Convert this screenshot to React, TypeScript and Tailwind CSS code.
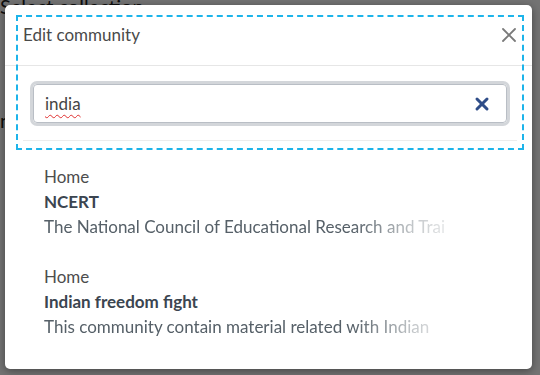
import { X } from 'lucide-react'

type Community = {
  parent: string
  name: string
  description: string
}

// descriptions are shown as clipped previews, faded out at the right
const results: Community[] = [
  {
    parent: 'Home',
    name: 'NCERT',
    description: 'The National Council of Educational Research and Trai',
  },
  {
    parent: 'Home',
    name: 'Indian freedom fight',
    description: 'This community contain material related with Indian',
  },
]

export default function App() {
  return (
    <div className="relative h-[375px] w-[540px] overflow-hidden bg-white font-['Lato',sans-serif]">
      {/* page behind the dialog */}
      <div className="-mt-[9px] text-[20px] text-[#222]">Select collection</div>
      <div className="mt-[84px] text-[20px] text-[#222]">n</div>

      <div className="absolute inset-0 bg-black/55 p-[5px] pr-[8px] pb-[6px]">
        <div className="h-full w-full overflow-hidden rounded-[5px] bg-white shadow-[0_2px_8px_rgba(0,0,0,0.4)]">
          <div className="flex h-[61px] items-center justify-between border-b border-[#e6e6e6] pl-[18px] pr-[11px]">
            <h2 className="text-[17px] text-[#4a4a4a]">Edit community</h2>
            <button type="button" className="text-[#7a7a7a]">
              <X size={24} strokeWidth={1.8} />
            </button>
          </div>

          <div className="ml-[18px] mr-[15px] border-b border-[#ececec] px-[10px] pb-[17px] pt-[18px]">
            <div className="flex h-[39px] items-center justify-between rounded-[4px] border border-[#b9bec5] pl-[11px] pr-[14px] shadow-[0_0_0_3px_#d3d6da]">
              <span className="text-[17px] text-[#444] underline decoration-[#e03030] decoration-wavy decoration-1 underline-offset-[4px]">
                india
              </span>
              <button type="button" className="text-[#2f4d88]">
                <X size={20} strokeWidth={3.6} />
              </button>
            </div>
          </div>

          <ul className="flex flex-col gap-[25px] pl-[39px] pt-[23px]">
            {results.map((item) => (
              <li key={item.name} className="text-[17px] leading-[25px]">
                <div className="text-[#4d4d4d]">{item.parent}</div>
                <div className="font-bold text-[#3b4550]">{item.name}</div>
                <div className="w-[440px] whitespace-nowrap text-[#566068] [mask-image:linear-gradient(to_right,#000_70%,rgba(0,0,0,0.35)_84%,transparent_97%)]">
                  {item.description}
                </div>
              </li>
            ))}
          </ul>
        </div>
      </div>

      {/* focus outline drawn over the dialog header */}
      <div className="pointer-events-none absolute left-[16px] top-[15px] h-[135px] w-[508px] border-2 border-dashed border-[#1db4ea]" />
    </div>
  )
}
